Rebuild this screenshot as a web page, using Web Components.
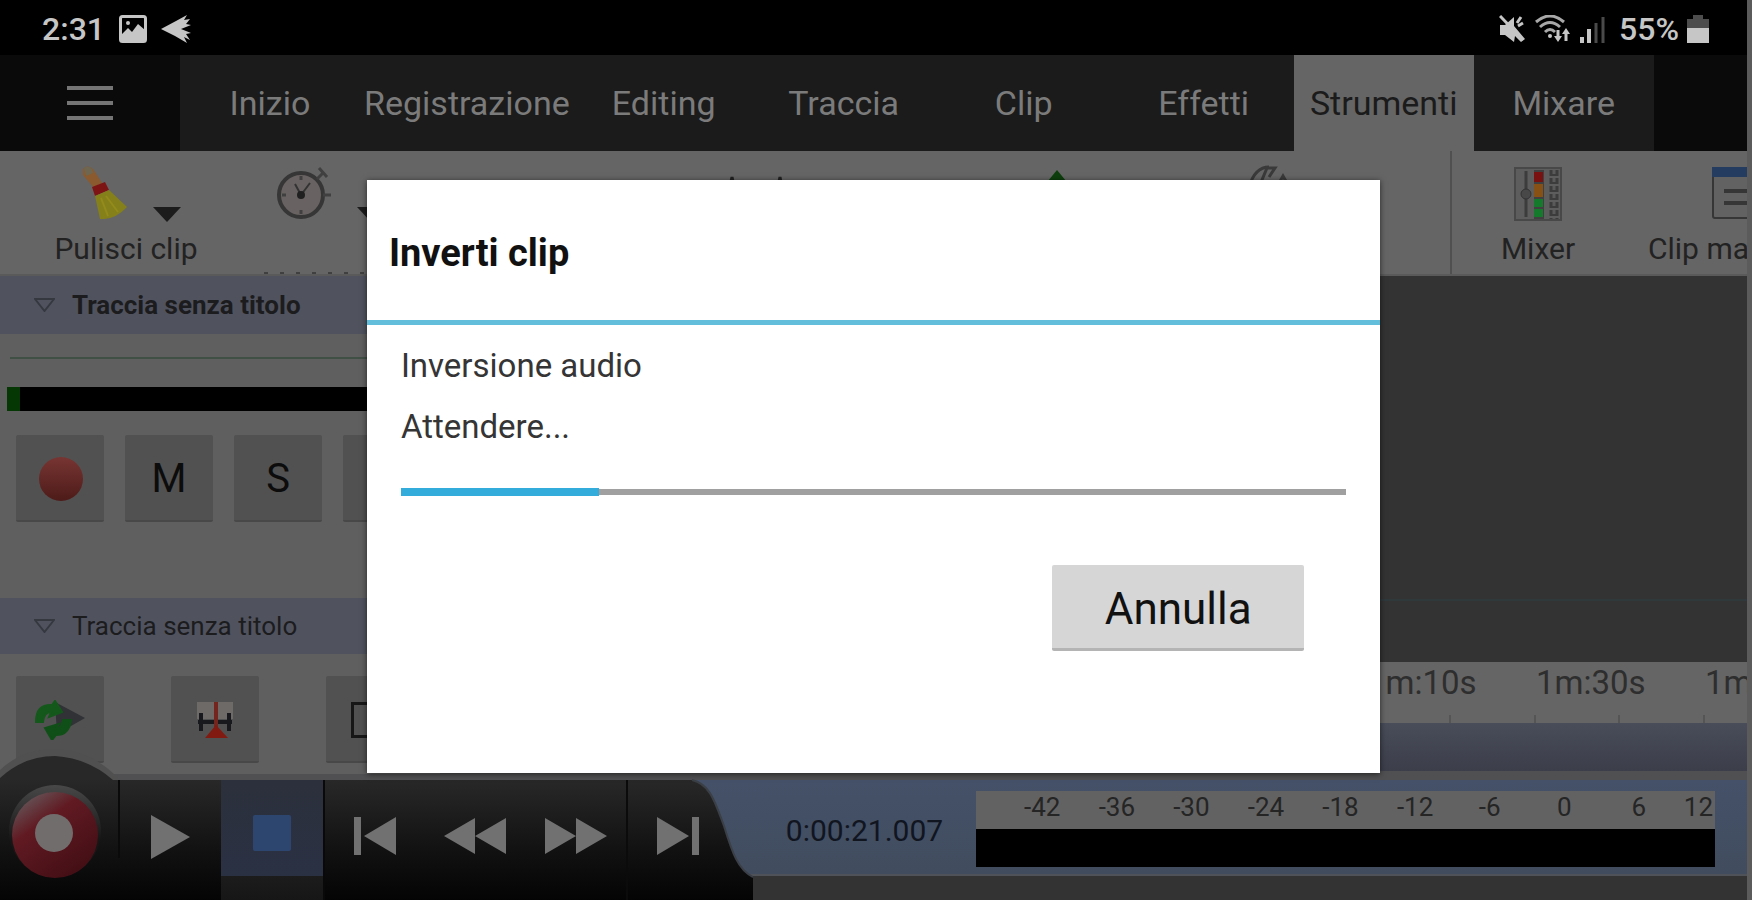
<!DOCTYPE html>
<html lang="it">
<head>
<meta charset="utf-8">
<meta name="viewport" content="width=device-width, initial-scale=1">
<title>Inverti clip</title>
<style>
    * { box-sizing: border-box; }
    body {
        margin: 0;
        background: #5b5b5b;
        font-family: Roboto, "Noto Sans", sans-serif;
    }
</style>
</head>
<body>
<audio-app></audio-app>

<script>
// Registers an element whose shadow root is filled from a markup string
function component(name, html, setup) {
    customElements.define(name, class extends HTMLElement {
        constructor() {
            super();
            this.attachShadow({ mode: 'open' });
        }

        connectedCallback() {
            this.shadowRoot.innerHTML = `
                <style>
                    * { box-sizing: border-box; }
                    button { font: inherit; color: inherit; border: 0; margin: 0; padding: 0; background: none; }
                    svg { display: block; }
                </style>
                ${typeof html === 'function' ? html(this) : html}
            `;
            if (setup) setup(this);
        }
    });
}

component('status-bar', `
    <style>
        :host {
            display: flex;
            align-items: center;
            height: 55px;
            padding: 2px 38px 0 42px;
            background: #000;
            color: #c6c6c6;
            font-size: 32px;
            font-weight: 500;
        }
        .left, .right { display: flex; align-items: center; }
        .left { gap: 14px; }
        .right { gap: 8px; margin-left: auto; }
        .level { margin-left: 6px; }
    </style>
    <div class="left">
        <span>2:31</span>
        <svg width="28" height="28" viewBox="0 0 28 28">
            <rect x="1.5" y="1.5" width="25" height="25" rx="2" fill="none" stroke="#c6c6c6" stroke-width="3"/>
            <path d="M2 20 L9 13 L13 17 L19 9 L26 15 V26 H2 Z" fill="#c6c6c6"/>
            <circle cx="9" cy="8" r="2" fill="#c6c6c6"/>
        </svg>
        <svg width="32" height="28" viewBox="0 0 32 28">
            <path d="M0 14 L15 6 L26 0 L23 5 L29 4 L25 9 L30 10 L20 14 L30 18 L25 19 L29 25 L23 22 L26 28 L14 21 Z" fill="#c6c6c6"/>
        </svg>
    </div>
    <div class="right">
        <svg width="28" height="28" viewBox="0 0 28 28">
            <path d="M1 10 H6 L15 2 V11 L26 24 L22 27 L16 21 L15 27 L6 20 H1 Z" fill="#c6c6c6"/>
            <path d="M1 1 L24 25 M18 8 L22 2 M19 11 L24 8" stroke="#c6c6c6" stroke-width="3"/>
        </svg>
        <svg width="36" height="28" viewBox="0 0 36 28">
            <path d="M1 7 Q15 -5 29 7 M5 12 Q15 3 25 12 M10 17 Q15 12 20 17" fill="none" stroke="#a8a8a8" stroke-width="3"/>
            <circle cx="15" cy="21" r="2" fill="#c6c6c6"/>
            <path d="M23 15 V23 M31 26 V17" stroke="#c6c6c6" stroke-width="3"/>
            <path d="M19 21 H27 L23 27 Z M27 19 H35 L31 13 Z" fill="#c6c6c6"/>
        </svg>
        <svg width="26" height="28" viewBox="0 0 26 28">
            <path d="M3 22 V28 M10 14 V28" stroke="#c6c6c6" stroke-width="4"/>
            <path d="M17 8 V28 M24 2 V28" stroke="#4a4a4a" stroke-width="3"/>
        </svg>
        <span class="level">55%</span>
        <svg width="22" height="28" viewBox="0 0 22 28">
            <path d="M0 4 H6 V0 H16 V4 H22 V14 H0 Z" fill="#4d4d4d"/>
            <path d="M0 13 H22 V28 H0 Z" fill="#c6c6c6"/>
        </svg>
    </div>
`);

component('ribbon-tabs', `
    <style>
        :host {
            display: flex;
            height: 96px;
            background: #0a0a0a;
            color: #7b7b7b;
            font-size: 34px;
        }
        .menu { width: 180px; display: grid; place-items: center; }
        nav { display: flex; background: #1b1b1b; }
        nav button { min-width: 180px; padding: 0 4px; }
        .active { background: #656565; color: #1b1b1b; }
    </style>
    <button class="menu" aria-label="Menu">
        <svg width="48" height="36" viewBox="0 0 48 36">
            <path d="M1 3 H47 M1 18 H47 M1 33 H47" stroke="#757575" stroke-width="4"/>
        </svg>
    </button>
    <nav></nav>
`, (host) => {
    const tabs = ['Inizio', 'Registrazione', 'Editing', 'Traccia', 'Clip', 'Effetti', 'Strumenti', 'Mixare'];
    const nav = host.shadowRoot.querySelector('nav');
    tabs.forEach(label => {
        const button = document.createElement('button');
        button.textContent = label;
        if (label === 'Strumenti') button.className = 'active';
        nav.appendChild(button);
    });
});

// Toolbar entry: icon in the default slot, optional label and drop-down arrow
component('tool-button', (host) => `
    <style>
        :host { display: block; flex: none; }
        button {
            width: 100%;
            height: 100%;
            display: flex;
            flex-direction: column;
            align-items: center;
            padding-top: 14px;
            font-size: 30px;
            line-height: 36px;
            color: #222;
            white-space: nowrap;
        }
        :host([align="end"]) button { align-items: flex-start; }
        :host([align="end"]) .icon { align-self: flex-end; }
        .icon { display: flex; height: 66px; gap: 26px; align-items: flex-start; }
        :host([menu]) .icon { padding-left: 10px; }
        .arrow { margin-top: 42px; }
    </style>
    <button aria-label="${host.getAttribute('label') || 'Strumento'}">
        <span class="icon">
            <slot></slot>
            ${host.hasAttribute('menu') ? `
                <svg class="arrow" width="28" height="15" viewBox="0 0 28 15"><path d="M0 0 H28 L14 15 Z" fill="#1c1c1c"/></svg>
            ` : ''}
        </span>
        <span>${host.getAttribute('label') || ''}</span>
    </button>
`);

component('tool-bar', `
    <style>
        :host {
            display: flex;
            height: 125px;
            background: #656565;
            border-bottom: 2px solid #5a5a5a;
            overflow: hidden;
        }
        .clean { width: 252px; }
        .timer {
            width: 146px;
            background: repeating-linear-gradient(90deg, transparent 0 12px, #404040 12px 16px) 0 100% / 100% 2px no-repeat;
        }
        .wave { width: 300px; margin-left: 207px; }
        .insert { width: 300px; }
        .draw { width: 126px; }
        .right { display: flex; margin-left: auto; border-left: 2px solid #505050; }
        .mixer { width: 172px; }
        .clips { width: 123px; padding-left: 24px; overflow: hidden; }
        .mixer svg, .clips svg { margin-top: 2px; }
    </style>
    <tool-button class="clean" label="Pulisci clip" menu>
        <svg width="46" height="54" viewBox="0 0 46 54">
            <path d="M2 4 Q6 -1 12 4 L21 18 L13 23 L2 10 Z" fill="#8b5a2e"/>
            <path d="M3 3 Q7 0 11 4 L12 8 L5 11 Z" fill="#6e6650"/>
            <path d="M11 22 L24 17 L28 25 L14 31 Z" fill="#7e1515"/>
            <path d="M14 31 L28 25 L46 42 Q34 55 19 54 Z" fill="#85801a"/>
            <path d="M20 33 L27 51 M25 31 L37 47" stroke="#938b1b" stroke-width="2"/>
        </svg>
    </tool-button>
    <tool-button class="timer" menu>
        <svg width="56" height="54" viewBox="0 0 56 54">
            <circle cx="26" cy="30" r="22" fill="#686262" stroke="#363636" stroke-width="4"/>
            <path d="M26 30 L20 19 M26 30 L35 18" stroke="#333" stroke-width="2"/>
            <circle cx="26" cy="30" r="4" fill="#202020"/>
            <path d="M42 14 L48 8 M44 3 L52 12 M48 30 H56 M26 11 V15 M26 45 V49 M7 30 H11" stroke="#404040" stroke-width="3"/>
        </svg>
    </tool-button>
    <tool-button class="wave">
        <svg width="60" height="54" viewBox="0 0 60 54"><path d="M2 34 L7 12 L12 34 M50 34 L55 12 L59 34" fill="none" stroke="#222" stroke-width="3"/></svg>
    </tool-button>
    <tool-button class="insert">
        <svg width="40" height="54" viewBox="0 0 40 54"><path d="M22 5 L36 22 H8 Z" fill="#0d3f0d"/></svg>
    </tool-button>
    <tool-button class="draw">
        <svg width="42" height="54" viewBox="0 0 42 54"><path d="M2 22 Q8 2 22 2 M12 22 L20 3 L28 3 L22 12 M32 18 L36 11 L40 18" fill="none" stroke="#3a3a3a" stroke-width="3"/></svg>
    </tool-button>
    <div class="right">
        <tool-button class="mixer" label="Mixer">
            <svg width="48" height="54" viewBox="0 0 48 54">
                <rect x="1" y="1" width="46" height="52" fill="#5d5d5d" stroke="#484848" stroke-width="2"/>
                <path d="M12 4 V50" stroke="#3c3c3c" stroke-width="3"/>
                <circle cx="12" cy="27" r="5" fill="#484848" stroke="#333"/>
                <path d="M25 3 V52" stroke="#404040" stroke-width="10"/>
                <rect x="20" y="5" width="9" height="10" fill="#791111"/>
                <rect x="20" y="17" width="9" height="13" fill="#875014"/>
                <rect x="20" y="32" width="9" height="8" fill="#167a2c"/>
                <rect x="20" y="42" width="9" height="8" fill="#167a2c"/>
                <path d="M40 3 V52" stroke="#3c3c3c" stroke-width="9" stroke-dasharray="6 2"/>
                <path d="M40 3 V52" stroke="#5a5a5a" stroke-width="3" stroke-dasharray="4 4"/>
            </svg>
        </tool-button>
        <tool-button class="clips" label="Clip ma" align="end">
            <svg width="35" height="54" viewBox="0 0 35 54">
                <rect x="1" y="1" width="52" height="50" rx="2" fill="#626262" stroke="#363636" stroke-width="2"/>
                <rect x="0" y="0" width="54" height="10" fill="#243c60"/>
                <path d="M12 24 H50 M12 36 H50" stroke="#363636" stroke-width="4"/>
            </svg>
        </tool-button>
    </div>
`);

component('track-header', `
    <style>
        :host {
            display: flex;
            align-items: center;
            gap: 17px;
            height: 56px;
            padding-left: 34px;
            background: #50535e;
            color: #1c1c1e;
            font-size: 26px;
        }
    </style>
    <svg width="21" height="14" viewBox="0 0 21 14"><path d="M1 1 H20 L10.5 13 Z" fill="none" stroke="#363840" stroke-width="2"/></svg>
    <slot></slot>
`);

component('pad-button', (host) => `
    <style>
        :host { display: block; flex: none; width: 88px; height: 87px; }
        button {
            width: 100%;
            height: 100%;
            display: grid;
            place-items: center;
            padding-top: 2px;
            background: #515151;
            border-bottom: 2px solid #484848;
            border-radius: 2px;
            color: #0c0c0c;
            font-size: 40px;
        }
    </style>
    <button aria-label="${host.getAttribute('name')}"><slot></slot></button>
`);

component('track-list', `
    <style>
        :host { display: block; background: #5f5f5f; border-bottom: 6px solid #505052; overflow: hidden; }
        .first { height: 322px; }
        .selected { height: 58px; font-weight: 700; }
        .line { height: 2px; margin: 23px 0 28px 10px; background: #405045; }
        .meter { height: 24px; margin-left: 7px; background: #000; border-left: 13px solid #043704; }
        .pads { display: flex; gap: 21px; padding: 24px 0 0 16px; }
        .tools { gap: 67px; padding-top: 22px; }
    </style>
    <section class="first">
        <track-header class="selected">Traccia senza titolo</track-header>
        <div class="line"></div>
        <div class="meter"></div>
        <div class="pads">
            <pad-button name="Registra traccia">
                <svg width="46" height="46" viewBox="0 0 46 46">
                    <defs><linearGradient id="red" x2="0" y2="1"><stop offset="0" stop-color="#773532"/><stop offset="1" stop-color="#4d1b19"/></linearGradient></defs>
                    <circle cx="24" cy="23" r="22" fill="url(#red)"/>
                </svg>
            </pad-button>
            <pad-button name="Muto">M</pad-button>
            <pad-button name="Solo">S</pad-button>
            <pad-button name="Effetti"></pad-button>
        </div>
    </section>
    <section>
        <track-header>Traccia senza titolo</track-header>
        <div class="pads tools">
            <pad-button name="Ciclo">
                <svg width="50" height="40" viewBox="0 0 50 40">
                    <path d="M20 2 L50 18 L22 34 Z" fill="#303236"/>
                    <path d="M1 22 Q1 4 17 5 L20 1 L27 12 L14 17 L16 12 Q9 12 8 22 Z" fill="#14591b" stroke="#14591b" stroke-width="2"/>
                    <path d="M36 20 Q34 35 21 35 L17 40 L10 28 L24 24 L21 29 Q27 28 28 20 Z" fill="#105018" stroke="#105018" stroke-width="2"/>
                </svg>
            </pad-button>
            <pad-button name="Centra">
                <svg width="38" height="38" viewBox="0 0 38 38">
                    <rect x="1" y="1" width="36" height="17" fill="#6d6a68"/>
                    <path d="M2 21 H36 M5 12 V30 M33 12 V30" stroke="#17191c" stroke-width="4"/>
                    <path d="M20 1 V28" stroke="#74251e" stroke-width="4"/>
                    <path d="M20 24 L32 37 H9 Z" fill="#811b12"/>
                </svg>
            </pad-button>
            <pad-button name="Selezione">
                <svg width="38" height="36" viewBox="0 0 38 36"><rect x="1.5" y="1.5" width="35" height="33" fill="none" stroke="#171717" stroke-width="3"/></svg>
            </pad-button>
        </div>
    </section>
`);

component('time-line', `
    <style>
        :host { display: flex; flex-direction: column; min-width: 0; }
        .canvas {
            flex: 1;
            background: #333;
            display: flex;
            flex-direction: column;
            justify-content: flex-end;
            padding-bottom: 61px;
        }
        .wave { height: 2px; background: #2f383b; }
        .ruler {
            display: flex;
            justify-content: flex-end;
            height: 61px;
            background: #656565;
            color: #2e2e2e;
            font-size: 33px;
            line-height: 42px;
            overflow: hidden;
        }
        .ruler span {
            flex: none;
            width: 169px;
            background: linear-gradient(#555, #555) 82px 100% / 2px 8px no-repeat,
                linear-gradient(#555, #555) 167px 100% / 2px 8px no-repeat;
        }
        .ruler span:last-child { width: 42px; background: none; }
        .scroll { height: 48px; background: linear-gradient(#484d59, #3c3e4a); }
        .edge { height: 9px; background: #505052; }
    </style>
    <div class="canvas"><div class="wave"></div></div>
    <div class="ruler"><span>1m:10s</span><span>1m:30s</span><span>1m</span></div>
    <div class="scroll"></div>
    <div class="edge"></div>
`);

component('transport-bar', `
    <style>
        :host { display: block; position: relative; width: 753px; }
        /* dark body with the record dome rising over the track list */
        .body { position: absolute; left: 0; bottom: 0; }
        .row { position: relative; display: flex; height: 120px; }
        button { width: 101px; height: 120px; padding-bottom: 8px; display: grid; place-items: center; }
        .record { width: 119px; padding: 0 12px 14px 0; }
        .play { width: 102px; padding-bottom: 6px; }
        .stop { width: 102px; background: linear-gradient(#2c303c 0, #2a3143 96px, #1c1c1c 96px, #161616 100%); padding-bottom: 14px; }
        .begin { border-left: 2px solid #090909; }
        .end { border-left: 2px solid #0b0b0b; }
    </style>
    <svg class="body" width="753" height="152" viewBox="0 0 753 152">
        <defs>
            <linearGradient id="dark" gradientUnits="userSpaceOnUse" x1="0" y1="32" x2="0" y2="152">
                <stop offset="0" stop-color="#282828"/>
                <stop offset=".6" stop-color="#111"/>
                <stop offset="1" stop-color="#040404"/>
            </linearGradient>
        </defs>
        <path d="M0 22 Q22 1 55 1 Q92 2 120 32 H0 Z" fill="#505050"/>
        <path d="M0 30 Q24 8 55 8 Q88 10 113 32 H0 Z" fill="#282828"/>
        <path d="M0 32 H692 C710 36 715 54 724 78 C732 104 738 122 753 129 V152 H0 Z" fill="url(#dark)"/>
        <path d="M692 32 C710 36 715 54 724 78 C732 104 738 122 753 129" fill="none" stroke="#3b3f46" stroke-width="2"/>
        <path d="M119 32 V110" stroke="#0a0a0a" stroke-width="2"/>
    </svg>
    <div class="row">
        <button class="record" aria-label="Registra">
            <svg width="94" height="98" viewBox="0 0 94 98">
                <defs>
                    <linearGradient id="ring" x1="0" y1="0" x2=".7" y2="1"><stop offset=".1" stop-color="#65575a"/><stop offset=".4" stop-color="#611a22"/><stop offset="1" stop-color="#430e15"/></linearGradient>
                    <linearGradient id="rim" x2="0" y2="1"><stop offset="0" stop-color="#484848"/><stop offset=".6" stop-color="#161616"/></linearGradient>
                </defs>
                <circle cx="48" cy="47" r="46" fill="url(#rim)"/>
                <circle cx="48" cy="51" r="43" fill="url(#ring)"/>
                <circle cx="47" cy="49" r="19" fill="#716d6d"/>
            </svg>
        </button>
        <button class="play" aria-label="Riproduci"><svg width="42" height="44"><path d="M2 0 L41 22 L2 44 Z" fill="#717171"/></svg></button>
        <button class="stop" aria-label="Ferma"><svg width="38" height="36"><rect width="38" height="36" rx="2" fill="#2d4670"/></svg></button>
        <button class="begin" aria-label="Inizio"><svg width="42" height="38"><path d="M0 0 H7 V38 H0 Z M42 0 V38 L10 19 Z" fill="#717171"/></svg></button>
        <button aria-label="Indietro"><svg width="62" height="36"><path d="M31 0 V36 L0 18 Z M62 0 V36 L31 18 Z" fill="#717171"/></svg></button>
        <button aria-label="Avanti"><svg width="62" height="36"><path d="M0 0 V36 L31 18 Z M31 0 V36 L62 18 Z" fill="#717171"/></svg></button>
        <button class="end" aria-label="Fine"><svg width="42" height="38"><path d="M0 0 V38 L32 19 Z M35 0 H42 V38 H35 Z" fill="#717171"/></svg></button>
    </div>
`);

component('level-meter', `
    <style>
        :host { display: block; font-size: 26px; color: #252525; }
        .scale { display: flex; height: 38px; padding: 0 2px 0 29px; line-height: 32px; background: #626262; text-align: center; }
        .scale span { flex: 1; }
        .scale span:last-child { flex: none; width: 37px; text-align: right; }
        .level { height: 38px; background: #000; }
    </style>
    <div class="scale"></div>
    <div class="level"></div>
`, (host) => {
    const scale = host.shadowRoot.querySelector('.scale');
    ['-42', '-36', '-30', '-24', '-18', '-12', '-6', '0', '6', '12'].forEach(db => {
        const span = document.createElement('span');
        span.textContent = db;
        scale.appendChild(span);
    });
});

component('player-bar', `
    <style>
        :host { display: flex; height: 120px; background: linear-gradient(#445168 0, #414c5e 94px, #50525a 94px, #50525a 96px, #333 96px); }
        transport-bar { flex: none; }
        .clock { flex: none; width: 223px; line-height: 102px; text-align: center; font-size: 30px; color: #10151f; }
        level-meter { flex: 1; margin: 11px 32px 0 0; }
    </style>
    <transport-bar></transport-bar>
    <div class="clock">0:00:21.007</div>
    <level-meter></level-meter>
`);

component('progress-dialog', (host) => `
    <style>
        :host {
            display: block;
            width: 58%;
            background: #fff;
            box-shadow: 0 1px 6px rgba(0, 0, 0, .6);
        }
        h1 {
            margin: 0;
            padding-left: 22px;
            font-size: 38px;
            font-weight: 700;
            line-height: 146px;
            height: 140px;
            color: #111;
        }
        .body { border-top: 5px solid #62bedb; padding: 10px 34px 122px 34px; }
        label { display: block; font-size: 33px; line-height: 61px; color: #353535; }
        progress {
            display: block;
            appearance: none;
            width: 100%;
            height: 8px;
            margin: 31px 0 69px;
            border: 0;
            background: none;
        }
        progress::-webkit-progress-bar { background: linear-gradient(#a0a0a0, #a0a0a0) 0 1px / 100% 6px no-repeat; }
        progress::-webkit-progress-value { background: #33acdc; }
        .cancel {
            display: block;
            width: 252px;
            height: 86px;
            margin: 0 42px 0 auto;
            padding-top: 5px;
            background: #d6d6d6;
            border-bottom: 3px solid #b4b4b4;
            border-radius: 2px;
            font-size: 44px;
            color: #111;
        }
    </style>
    <h1>${host.getAttribute('heading')}</h1>
    <div class="body">
        <label for="bar"><slot></slot></label>
        <progress id="bar" max="100" value="${host.getAttribute('value')}"></progress>
        <button class="cancel">Annulla</button>
    </div>
`);

component('audio-app', `
    <style>
        :host {
            display: grid;
            grid-template-rows: auto auto auto 1fr auto;
            min-height: 100vh;
            margin-right: 5px;
            position: relative;
            background: #505050;
            overflow: hidden;
        }
        .workspace { display: grid; grid-template-columns: 440px 1fr; min-height: 504px; min-width: 0; }
        .overlay {
            position: absolute;
            inset: 52px 0 0 0;
            display: grid;
            place-items: center;
        }
    </style>
    <status-bar></status-bar>
    <ribbon-tabs></ribbon-tabs>
    <tool-bar></tool-bar>
    <div class="workspace">
        <track-list></track-list>
        <time-line></time-line>
    </div>
    <player-bar></player-bar>
    <div class="overlay">
        <progress-dialog role="dialog" aria-modal="true" aria-label="Inverti clip" heading="Inverti clip" value="21">Inversione audio<br>Attendere...</progress-dialog>
    </div>
`);
</script>
</body>
</html>
